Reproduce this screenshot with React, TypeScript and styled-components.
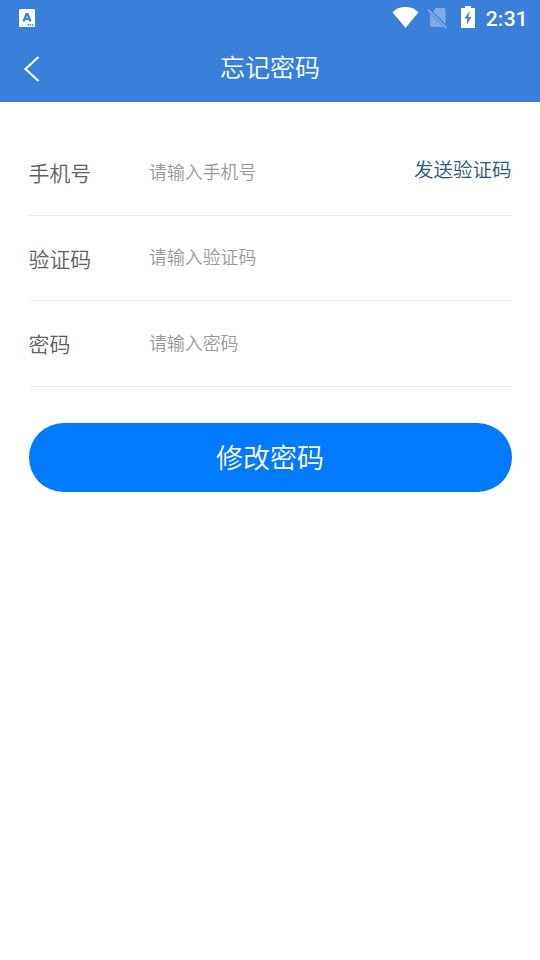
import React from "react";
import styled, { createGlobalStyle } from "styled-components";

const Global = createGlobalStyle`
  * { box-sizing: border-box; }
  body { margin: 0; background: #fff; font-family: "Noto Sans CJK SC", sans-serif; font-weight: 350; }
`;
const Page = styled.main`width: 540px; height: 960px; background: #fff; overflow: hidden;`;
const Header = styled.header`height: 102px; background: #3a7fda;`;
const StatusBar = styled.div`height: 36px; display: flex; align-items: center; justify-content: space-between; padding: 0 12px 0 19px;`;
const StatusGroup = styled.div`display: flex; align-items: center;`;
const Clock = styled.time`color: #fff; font: 500 21px/36px Roboto, sans-serif; letter-spacing: 0.25px; padding-top: 1px; margin-left: 11px;`;
const NavBar = styled.div`height: 63px; display: grid; grid-template-columns: 60px 1fr 60px; align-items: center;`;
const Back = styled.button`border: 0; padding: 3px 0 0 23px; background: none; display: flex;`;
const Title = styled.h1`margin: 0 0 3px; color: #fff; font-size: 25px; line-height: 36px; font-weight: 350; text-align: center;`;
const Form = styled.form`padding: 28px 28px 0 29px;`;
const Row = styled.label<{ $h: number }>`height: ${p => p.$h}px; border-bottom: 1px solid #ebebeb; display: flex; align-items: center;`;
const Label = styled.span<{ $lift?: number }>`width: 120px; padding-bottom: ${p => p.$lift ?? 0}px; color: #5e6065; font-size: 20.9px; text-indent: -0.5px;`;
const Input = styled.input<{ $lift?: number }>`flex: 1; min-width: 0; border: 0; padding: 0 0 ${p => p.$lift ?? 3}px; outline: 0; background: none; font: 350 17.9px "Noto Sans CJK SC", sans-serif; &::placeholder { color: #999; opacity: 1; }`;
const Send = styled.button`border: 0; padding: 0; background: none; color: #2c5584; font: 350 19.5px "Noto Sans CJK SC", sans-serif; margin: 0 0.5px 8px 0;`;
const Submit = styled.button`margin-top: 36px; width: 100%; height: 69px; border: 0; padding: 0 1px 2px 0; border-radius: 35px; background: #007aff; color: #fff; font: 350 27px "Noto Sans CJK SC", sans-serif;`;

const WifiIcon = () => <svg width="27" height="22" viewBox="0 0 27 22"><path d="M.5 5.200C4 1.800 8.400 0 13.500 0S23 1.800 26.500 5.200L13.500 21Z" fill="#fff" /></svg>;
const NoSimIcon = () => <svg width="21" height="22" viewBox="0 0 21 22"><g opacity=".34"><path d="M6 4.500 9 1h7.500q2 0 2 2v14ZM3 6.500 16.500 20H5q-2 0-2-2Z" fill="#fff" /><path d="m1 2.500 18.500 18.500" stroke="#fff" strokeWidth="1.800" /></g></svg>;
const BatteryIcon = () => <svg width="14" height="22" viewBox="0 0 14 22"><path d="M4 2V0h6v2h4v20H0V2Z" fill="#fff" /><path d="M8.500 5 3.500 12.500h3L5.500 19 10.500 11H7.500Z" fill="#3a7fda" /></svg>;

const Signals = styled.div`display: flex; align-items: center; gap: 8px; padding-bottom: 1px; > svg:last-child { margin: 0 0 1px 5px; }`;

export default function App() {
  return <Page><Global /><Header>
    <StatusBar>
      <svg width="16" height="18" viewBox="0 0 16 18"><rect width="16" height="18" rx="1.5" fill="#fff" /><path d="M4.500 12.500 7.500 5h1l3 7.500M6 10h4" fill="none" stroke="#3a7fda" strokeWidth="2.200" /><path d="M8.500 16h6" stroke="#3a7fda" strokeWidth="1.300" strokeDasharray="1.500 .7" /></svg>
      <StatusGroup><Signals><WifiIcon /><NoSimIcon /><BatteryIcon /></Signals><Clock>2:31</Clock></StatusGroup>
    </StatusBar>
    <NavBar><Back type="button" aria-label="返回"><svg width="17" height="28" viewBox="0 0 17 28"><path d="M15.5 2 2.5 14l13 12" fill="none" stroke="#fff" strokeWidth="2.200" /></svg></Back><Title>忘记密码</Title></NavBar>
  </Header><Form>
    <Row $h={86}><Label $lift={2}>手机号</Label><Input placeholder="请输入手机号" /><Send type="button">发送验证码</Send></Row>
    <Row $h={85}><Label>验证码</Label><Input $lift={4} placeholder="请输入验证码" /></Row>
    <Row $h={86}><Label $lift={2}>密码</Label><Input placeholder="请输入密码" /></Row>
    <Submit type="button">修改密码</Submit>
  </Form></Page>;
}
